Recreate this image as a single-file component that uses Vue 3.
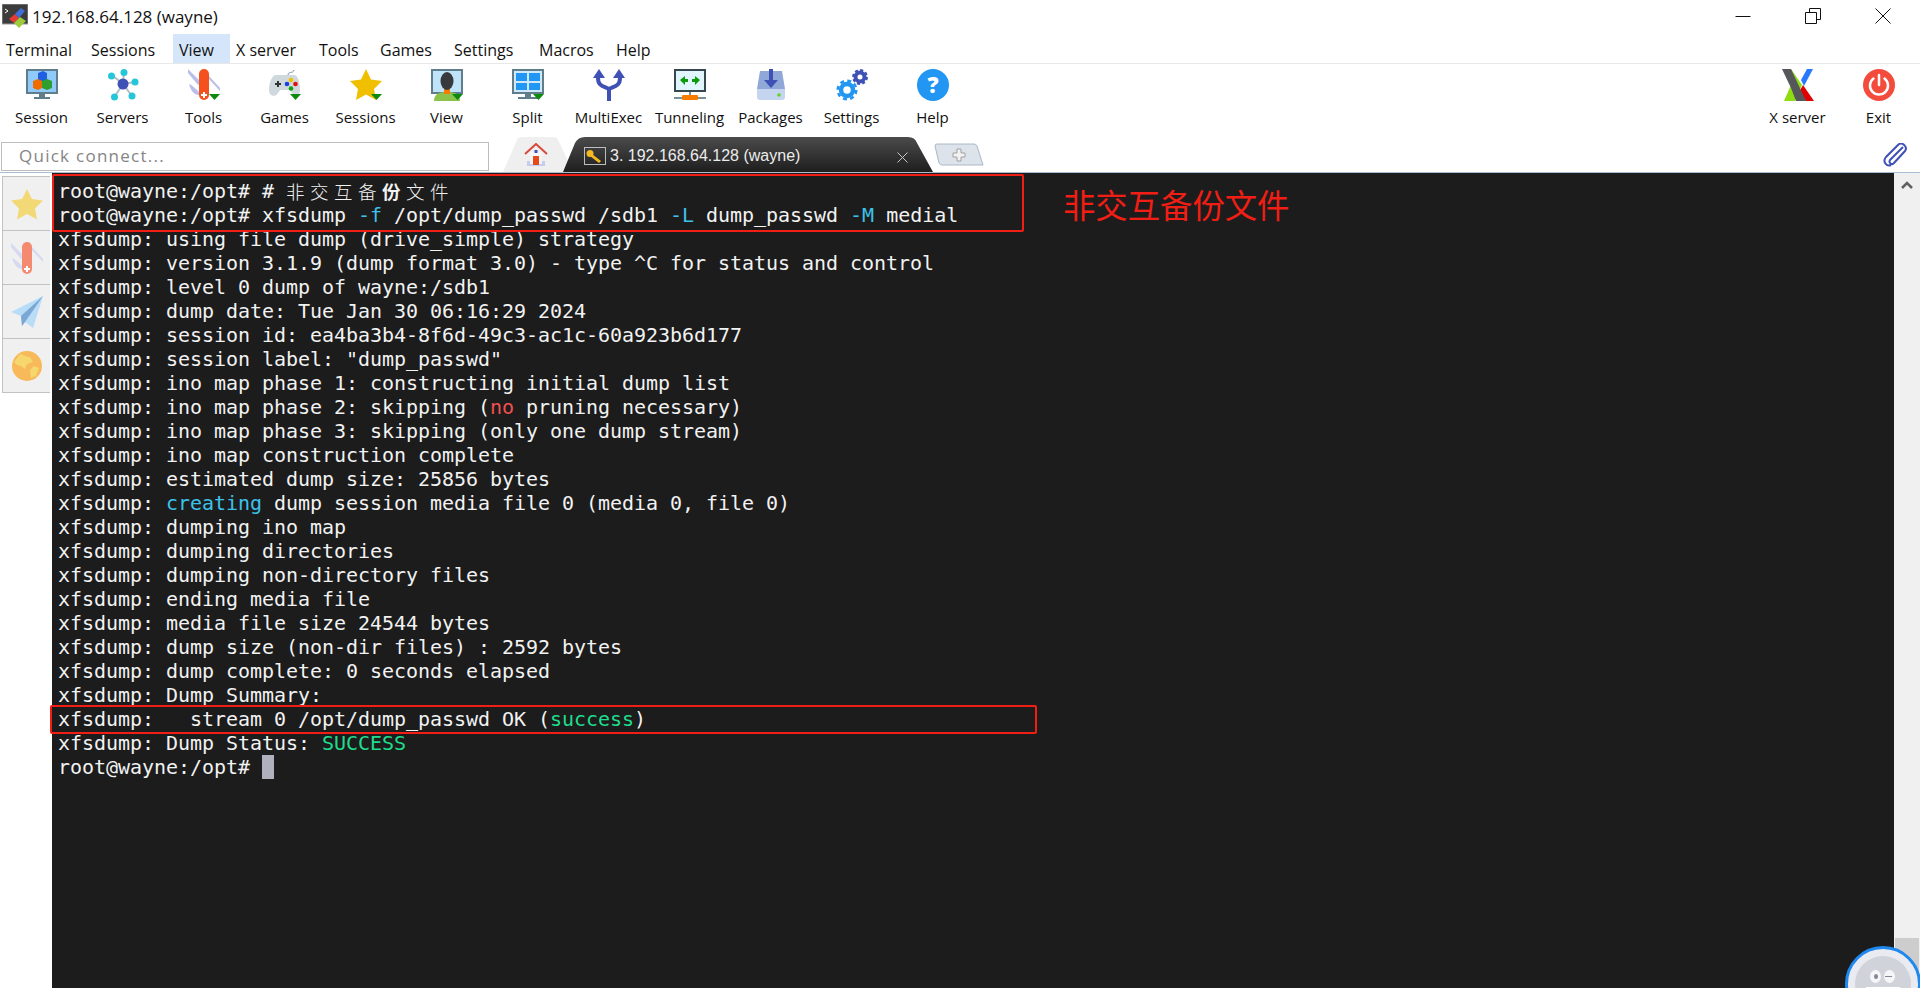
<script setup>
const menus = [
  { name: 'Terminal', width: 85 },
  { name: 'Sessions', width: 88 },
  { name: 'View', width: 57 },
  { name: 'X server', width: 83 },
  { name: 'Tools', width: 61 },
  { name: 'Games', width: 74 },
  { name: 'Settings', width: 85 },
  { name: 'Macros', width: 77 },
  { name: 'Help', width: 60 },
]
const tools = ['Session', 'Servers', 'Tools', 'Games', 'Sessions', 'View', 'Split', 'MultiExec', 'Tunneling', 'Packages', 'Settings', 'Help']
const cjk = ['非', '交', '互', '备', '份', '文', '件']
const lines = [
  [['root@wayne:/opt# xfsdump '], ['-f', 'c'], [' /opt/dump_passwd /sdb1 '], ['-L', 'c'], [' dump_passwd '], ['-M', 'c'], [' medial']],
  [['xfsdump: using file dump (drive_simple) strategy']],
  [['xfsdump: version 3.1.9 (dump format 3.0) - type ^C for status and control']],
  [['xfsdump: level 0 dump of wayne:/sdb1']],
  [['xfsdump: dump date: Tue Jan 30 06:16:29 2024']],
  [['xfsdump: session id: ea4ba3b4-8f6d-49c3-ac1c-60a923b6d177']],
  [['xfsdump: session label: "dump_passwd"']],
  [['xfsdump: ino map phase 1: constructing initial dump list']],
  [['xfsdump: ino map phase 2: skipping ('], ['no', 'r'], [' pruning necessary)']],
  [['xfsdump: ino map phase 3: skipping (only one dump stream)']],
  [['xfsdump: ino map construction complete']],
  [['xfsdump: estimated dump size: 25856 bytes']],
  [['xfsdump: '], ['creating', 'c'], [' dump session media file 0 (media 0, file 0)']],
  [['xfsdump: dumping ino map']],
  [['xfsdump: dumping directories']],
  [['xfsdump: dumping non-directory files']],
  [['xfsdump: ending media file']],
  [['xfsdump: media file size 24544 bytes']],
  [['xfsdump: dump size (non-dir files) : 2592 bytes']],
  [['xfsdump: dump complete: 0 seconds elapsed']],
  [['xfsdump: Dump Summary:']],
  [['xfsdump:   stream 0 /opt/dump_passwd OK ('], ['success', 'g'], [')']],
  [['xfsdump: Dump Status: '], ['SUCCESS', 'g']],
]
</script>

<template>
  <div class="app">
    <header class="title">
      <svg class="logo" viewBox="0 0 26 24" width="26" height="24">
        <rect x="0" y="0" width="26" height="20" fill="#3c3c3c" />
        <rect x="0" y="0" width="26" height="20" fill="none" stroke="#9a9a9a" />
        <path d="M3 5l3 2-3 2" fill="none" stroke="#fff" stroke-width="1" />
        <path d="M7 15l6-5 4 4-5 5z" fill="#e53935" />
        <path d="M13 10l6-6 4 3-6 7z" fill="#3f6fd8" />
        <path d="M12 19l6-6 6 4-7 7z" fill="#9ccc3c" />
      </svg>
      <span class="title-text">192.168.64.128 (wayne)</span>
      <div class="win">
        <svg viewBox="0 0 16 16" width="16" height="16"><path d="M0.5 8.500h15" stroke="#111" fill="none" /></svg>
        <svg viewBox="0 0 16 16" width="16" height="16"><path d="M0.5 4.500h11v11h-11zM4.500 4.500v-4h11v11h-4" stroke="#111" fill="none" /></svg>
        <svg viewBox="0 0 16 16" width="16" height="16"><path d="M0.5 0.500l15 15M15.500 0.500l-15 15" stroke="#111" fill="none" /></svg>
      </div>
    </header>

    <nav class="menu">
      <span v-for="m in menus" :key="m.name" class="menu-item" :class="{ active: m.name === 'View' }" :style="{ width: m.width + 'px' }">{{ m.name }}</span>
    </nav>

    <section class="toolbar">
      <div v-for="t in tools" :key="t" class="tool">
        <svg viewBox="0 0 32 32" width="32" height="32">
          <template v-if="t === 'Session'">
            <rect width="32" height="25" fill="#607d8b" />
            <rect x="2" y="2" width="28" height="21" fill="#90caf9" />
            <path d="M13 25h6v3h-6zM8 28h16v2H8z" fill="#607d8b" />
            <path d="M12 4l5-2 4 2v7l-4 2-5-2z" fill="#1f5fe0" />
            <path d="M7 12l5-2 4 2v7l-4 2-5-2z" fill="#ef6c00" />
            <path d="M16 12l5-2 5 2v7l-5 2-5-2z" fill="#2e9e2e" />
          </template>
          <template v-else-if="t === 'Servers'">
            <path d="M16 15L6 7M16 15L17 3M16 15L28 13M16 15L25 27M16 15L8 27" stroke="#b0bec5" stroke-width="2" />
            <circle cx="17" cy="3.500" r="3.500" fill="#26c6da" /><circle cx="4.500" cy="7" r="3.500" fill="#26c6da" />
            <circle cx="28" cy="13" r="3.500" fill="#26c6da" /><circle cx="25" cy="27" r="3.500" fill="#26c6da" />
            <circle cx="7.500" cy="28" r="3.500" fill="#26c6da" /><circle cx="16" cy="15" r="5.500" fill="#3f51b5" />
          </template>
          <template v-else-if="t === 'Tools'">
            <path d="M0 0l13 13-3 3L0 4zM32 22L19 8l2-1 11 12zM1 15c3 1 6 4 10 8v3C7 26 3 23 1 15z" fill="#b9bfe8" />
            <rect x="11" y="0" width="10" height="31" rx="5" fill="#f4511e" />
            <path d="M15 23h2v2h2v2h-2v2h-2v-2h-2v-2h2z" fill="#fff" />
            <path d="M21 25h11l-5.500 6z" fill="#0b8a0b" />
          </template>
          <template v-else-if="t === 'Games'">
            <path d="M19 6c0-4 5-1 6-5" fill="none" stroke="#78909c" />
            <path d="M7 6h18c4 0 6 8 6 15 0 6-5 8-8 3l-2-3H11l-2 3c-3 5-9 3-9-3C0 14 3 6 7 6z" fill="#cfd8dc" />
            <path d="M6 14h2v-2h2v2h2v2h-2v2H8v-2H6z" fill="#333" />
            <circle cx="22" cy="11" r="2.300" fill="#f0c000" /><circle cx="18" cy="15" r="2.300" fill="#1a3fe0" />
            <circle cx="26.500" cy="15" r="2.300" fill="#e01010" /><circle cx="22" cy="19.500" r="2.300" fill="#10a010" />
            <path d="M21 25h11l-5.500 6z" fill="#0b8a0b" />
          </template>
          <template v-else-if="t === 'Sessions'">
            <path d="M16 0l5 10.500 11 1.500-8 8 2 11-10-5.500L6 31l2-11-8-8 11-1.500z" fill="#f0c000" />
            <path d="M21 25h11l-5.500 6z" fill="#0b8a0b" />
          </template>
          <template v-else-if="t === 'View'">
            <rect width="32" height="25" fill="#607d8b" />
            <rect x="2" y="2" width="28" height="21" fill="#bfe3f8" />
            <path d="M3 32c0-7 5-9 13-9s13 2 13 9z" fill="#8bc34a" />
            <rect x="13" y="18" width="6" height="7" fill="#f57c00" />
            <ellipse cx="16" cy="12" rx="6.500" ry="9" fill="#37393d" />
            <path d="M21 25h11l-5.500 6z" fill="#0b8a0b" />
          </template>
          <template v-else-if="t === 'Split'">
            <rect width="32" height="25" fill="#607d8b" />
            <rect x="2" y="2" width="28" height="21" fill="#cfe8fa" />
            <path d="M4 4h11v8H4zM17 4h11v8H17zM4 14h11v7H4zM17 14h11v7H17z" fill="#2196f3" />
            <path d="M13 25h6v3h-6zM6 28h20v2H6z" fill="#607d8b" />
            <path d="M21 25h11l-5.500 6z" fill="#0b8a0b" />
          </template>
          <template v-else-if="t === 'MultiExec'">
            <path d="M5 9c0 8 5 8 11 11 6-3 11-3 11-11M16 19v13" fill="none" stroke="#3f51b5" stroke-width="4" />
            <path d="M0 9L6 0l6 9zM20 9l6-9 6 9z" fill="#3f51b5" />
          </template>
          <template v-else-if="t === 'Tunneling'">
            <rect width="32" height="23" fill="#37474f" />
            <rect x="2" y="2" width="28" height="19" fill="#e1f5fe" />
            <path d="M6 11l5-4v3h3v3h-3v3zM26 11l-5-4v3h-3v3h3v3z" fill="#0a9a0a" />
            <path d="M15 23h2v4h-2zM0 28h32v2H0z" fill="#78909c" />
            <rect x="8" y="26" width="16" height="5" rx="1" fill="#f57c00" />
          </template>
          <template v-else-if="t === 'Packages'">
            <path d="M5 2h22l3 18H2z" fill="#8fa8d8" />
            <path d="M2 20h28v8a3 3 0 0 1-3 3H5a3 3 0 0 1-3-3z" fill="#c5d5f0" />
            <circle cx="24" cy="26" r="1.800" fill="#66d02a" />
            <path d="M14 0h4v11h5l-7 8-7-8h5z" fill="#3f51b5" />
          </template>
          <template v-else-if="t === 'Settings'">
            <circle cx="11" cy="21" r="6" fill="none" stroke="#2196f3" stroke-width="4.500" />
            <circle cx="11" cy="21" r="9.300" fill="none" stroke="#2196f3" stroke-width="2.500" stroke-dasharray="4 3.300" />
            <circle cx="24" cy="8" r="4.500" fill="none" stroke="#3f51b5" stroke-width="4" />
            <circle cx="24" cy="8" r="6.800" fill="none" stroke="#3f51b5" stroke-width="2.300" stroke-dasharray="3 2.340" />
          </template>
          <template v-else-if="t === 'Help'">
            <circle cx="16" cy="16" r="16" fill="#2196f3" />
            <text x="16" y="23.500" text-anchor="middle" class="q">?</text>
          </template>
        </svg>
        <span class="tool-label">{{ t }}</span>
      </div>
      <div class="spacer"></div>
      <div class="tool">
        <svg viewBox="0 0 32 32" width="32" height="32">
          <path d="M1 0h8l11 16-7 16H2l7-16z" fill="#8fdc10" />
          <path d="M19 11L25 0h6L22 17z" fill="#2979ff" />
          <path d="M21 16l11 16h-8l-7-9z" fill="#e00000" />
          <path d="M0 0h9l15 32h-10L9 19z" fill="#55575a" />
        </svg>
        <span class="tool-label">X server</span>
      </div>
      <div class="tool">
        <svg viewBox="0 0 32 32" width="32" height="32">
          <circle cx="16" cy="16" r="16" fill="#f44c3c" />
          <path d="M10.500 9.500a9 9 0 1 0 11 0" fill="none" stroke="#fff" stroke-width="2.500" stroke-linecap="round" />
          <path d="M16 6v10" stroke="#fff" stroke-width="2.500" stroke-linecap="round" />
        </svg>
        <span class="tool-label">Exit</span>
      </div>
    </section>

    <section class="tabs">
      <div class="quick">Quick connect...</div>
      <div class="home-tab">
        <svg class="tab-bg" viewBox="0 0 68 35" width="68" height="35">
          <path d="M0 35L14 3Q15 0 19 0H50Q54 0 55 3L68 30V35z" fill="#efefef" />
        </svg>
        <svg class="home-icon" viewBox="0 0 24 24" width="24" height="24">
          <path d="M3 18h18v5H3z" fill="#c5cdf0" />
          <path d="M6 9h12v12H6z" fill="#f5f5f5" />
          <rect x="9" y="13" width="6" height="9" fill="#e64a19" />
          <rect x="10.500" y="7" width="3" height="3" fill="#3f51b5" />
          <path d="M1 11L12 1l11 10" fill="none" stroke="#d84a3a" stroke-width="2" />
        </svg>
      </div>
      <div class="dark-tab">
        <svg class="tab-bg" viewBox="0 0 370 35" width="370" height="35" preserveAspectRatio="none">
          <defs>
            <linearGradient id="dk" x1="0" y1="0" x2="0" y2="1">
              <stop offset="0" stop-color="#4b4b4b" /><stop offset="1" stop-color="#1e1e1e" />
            </linearGradient>
          </defs>
          <path d="M0 35L12 6Q15 0 22 0H345Q352 0 354 6L370 35z" fill="url(#dk)" />
        </svg>
        <span class="key-box">
          <svg viewBox="0 0 20 15" width="20" height="15">
            <circle cx="5" cy="4.500" r="3.500" fill="#f5b921" />
            <path d="M7 5l9 7-2 2-9-7z" fill="#f5b921" />
          </svg>
        </span>
        <span class="tab-text">3. 192.168.64.128 (wayne)</span>
        <svg class="tab-close" viewBox="0 0 11 11" width="11" height="11"><path d="M.5.5l10 10M10.500.5l-10 10" stroke="#c8c8c8" fill="none" /></svg>
      </div>
      <div class="new-tab">
        <svg class="tab-bg" viewBox="0 0 50 23" width="50" height="23"><path d="M1 3Q1 1 3 1H40Q42 1 43 3L49 22H8Q6 22 5 20z" fill="#dde3ea" stroke="#a9b8c8" /></svg>
        <svg class="plus" viewBox="0 0 14 14" width="14" height="14"><path d="M5 1h4v4h4v4H9v4H5V9H1V5h4z" fill="#f2f2f2" stroke="#a0a0a0" /></svg>
      </div>
      <div class="spacer"></div>
      <svg class="clip" viewBox="0 0 24 24" width="24" height="24">
        <path d="M20 5L7 18a2.500 2.500 0 0 0 4 3L22 9c3-4-3-10-7-6L3 15c-4 5 1 10 5 8" fill="none" stroke="#3f51b5" stroke-width="2" transform="translate(0 -1)" />
      </svg>
    </section>

    <main class="body">
      <aside class="side">
        <div class="side-cell">
          <svg viewBox="0 0 32 32" width="32" height="32"><path d="M16 1l5 10 11 1.500-8 8 2 11-10-5.500L6 31.500l2-11-8-8 11-1.500z" fill="#f3d976" /></svg>
        </div>
        <div class="side-cell">
          <svg viewBox="0 0 32 32" width="32" height="32">
            <path d="M0 1l13 13-3 3L0 5zM32 20L19 6l2-1 11 12zM1 16c3 1 6 4 10 8v3C7 27 3 23 1 16z" fill="#d5d9f2" />
            <rect x="11" y="0" width="10" height="32" rx="5" fill="#f48a70" />
            <path d="M15 24h2v2h2v2h-2v2h-2v-2h-2v-2h2z" fill="#fff" />
          </svg>
        </div>
        <div class="side-cell">
          <svg viewBox="0 0 32 32" width="32" height="32">
            <path d="M0 16L32 0 22 32l-8-6-3 4-1-10z" fill="#b9dcf7" />
            <path d="M32 0L10 20l1 10 3-4z" fill="#7ba7d4" />
          </svg>
        </div>
        <div class="side-cell">
          <svg viewBox="0 0 30 30" width="30" height="30">
            <circle cx="15" cy="15" r="15" fill="#f7b95a" />
            <path d="M8 3c5 1 6 3 10 3l3 5-6 2-2 5-4-3-4-1-3-3zM22 15l5 2-3 8-5 2-1-8z" fill="#f5d76e" />
          </svg>
        </div>
      </aside>

      <div class="term">
        <div class="line">root@wayne:/opt# # <span v-for="(c, i) in cjk" :key="c" class="cell" :class="{ heavy: i === 4 }">{{ c }}</span></div>
        <div v-for="(l, i) in lines" :key="i" class="line"><span v-for="(s, j) in l" :key="j" :class="s[1]">{{ s[0] }}</span></div>
        <div class="line">root@wayne:/opt# <span class="cursor"></span></div>

        <div class="mark mark-top"></div>
        <div class="mark mark-stream"></div>
        <div class="note">非交互备份文件</div>
      </div>

      <aside class="scroll">
        <svg class="arrow" viewBox="0 0 12 8" width="12" height="8"><path d="M1 7l5-5 5 5" fill="none" stroke="#606060" stroke-width="2.500" /></svg>
        <div class="spacer"></div>
        <div class="thumb"></div>
      </aside>

      <div class="avatar">
        <div class="face">
          <span class="eye left"></span><span class="eye right"></span>
          <span class="mouth"></span>
        </div>
      </div>
    </main>
  </div>
</template>

<style scoped>
.app {
  width: 1920px;
  height: 988px;
  display: flex;
  flex-direction: column;
  background: #fff;
  overflow: hidden;
  font-family: "Open Sans", "Noto Sans", sans-serif;
  color: #111;
}
.title {
  height: 32px;
  display: flex;
  align-items: center;
  padding-left: 2px;
  flex: none;
}
.logo { margin-right: 4px; }
.title-text { font-size: 17px; }
.win {
  margin-left: auto;
  display: flex;
  gap: 54px;
  padding-right: 29px;
}
.menu {
  height: 32px;
  flex: none;
  display: flex;
  border-bottom: 1px solid #e8e8e8;
  box-sizing: border-box;
}
.menu-item {
  padding: 3px 0 0 6px;
  box-sizing: border-box;
  font-size: 16px;
  line-height: 27px;
  margin-top: 2px;
  white-space: nowrap;
}
.menu-item.active {
  background: #d5e6fb;
}
.toolbar {
  height: 76px;
  flex: none;
  display: flex;
  padding: 5px 1px 0;
  box-sizing: border-box;
}
.tool {
  width: 81px;
  display: flex;
  flex-direction: column;
  align-items: center;
}
.tool-label {
  font-size: 15px;
  line-height: 20px;
  margin-top: 6px;
  white-space: nowrap;
}
.q {
  font: 800 22px "Open Sans", sans-serif;
  fill: #fff;
}
.spacer { flex: 1; }
.tabs {
  height: 33px;
  flex: none;
  display: flex;
  align-items: flex-end;
  border-bottom: 1px solid #a9bcd0;
  box-sizing: border-box;
  padding-left: 1px;
}
.quick {
  width: 488px;
  height: 29px;
  box-sizing: border-box;
  border: 1px solid #bdbdbd;
  margin-bottom: 1px;
  padding-left: 17px;
  font-size: 17px;
  line-height: 25px;
  color: #858585;
  letter-spacing: 1.260px;
}
.home-tab {
  position: relative;
  width: 68px;
  height: 32px;
  margin-left: 14px;
  display: flex;
  justify-content: center;
  align-items: center;
}
.tab-bg {
  position: absolute;
  left: 0;
  bottom: 0;
}
.home-icon { position: relative; top: -1px; left: -1px; }
.dark-tab {
  position: relative;
  width: 370px;
  height: 32px;
  margin-left: -8px;
  display: flex;
  align-items: center;
  padding-left: 21px;
  box-sizing: border-box;
  color: #ececec;
}
.key-box {
  position: relative;
  width: 22px;
  height: 18px;
  box-sizing: border-box;
  border: 1px solid #bdbdbd;
  display: flex;
  align-items: center;
  justify-content: center;
  margin-right: 4px;
}
.tab-text {
  position: relative;
  font-family: "Liberation Sans", sans-serif;
  font-size: 16px;
}
.tab-close {
  position: absolute;
  left: 334px;
  top: 12px;
}
.new-tab {
  position: relative;
  width: 50px;
  height: 23px;
  margin-left: 1px;
  margin-bottom: 6px;
  display: flex;
  align-items: center;
  justify-content: center;
}
.plus { position: relative; }
.clip { margin: 0 13px 5px 0; }
.body {
  position: relative;
  flex: 1;
  min-height: 0;
  display: flex;
  overflow: hidden;
}
.side {
  width: 52px;
  flex: none;
  box-sizing: border-box;
  padding: 3px 0 0 2px;
}
.side-cell {
  width: 48px;
  height: 54px;
  box-sizing: border-box;
  background: #f0f0f0;
  border: 1px solid #c2c2c2;
  border-bottom: 0;
  border-right: 0;
  display: flex;
  align-items: center;
  justify-content: center;
}
.side-cell:last-child { height: 55px; border-bottom: 1px solid #c2c2c2; }
.term {
  position: relative;
  flex: 1;
  background: #1c1c1c;
  color: #f2f2f2;
  box-sizing: border-box;
  padding: 6px 0 0 6px;
  font-family: "DejaVu Sans Mono", monospace;
  font-size: 20px;
  line-height: 24px;
  letter-spacing: -0.040px;
}
.line { height: 24px; white-space: pre; }
.c { color: #3cc2ea; }
.r { color: #f05050; }
.g { color: #1fdc8c; }
.cell {
  display: inline-block;
  width: 24px;
  font-family: "Noto Sans CJK SC", sans-serif;
  font-size: 18.500px;
  font-weight: 300;
  line-height: 24px;
  vertical-align: top;
}
.cell.heavy { font-weight: 700; }
.cursor {
  display: inline-block;
  width: 12px;
  height: 24px;
  background: #b0b0bf;
  vertical-align: top;
}
.mark {
  position: absolute;
  border: 2px solid #f01e14;
  border-radius: 2px;
  box-sizing: border-box;
}
.mark-top { left: 0; top: 1px; width: 972px; height: 58px; }
.mark-stream { left: -2px; top: 532px; width: 987px; height: 29px; }
.note {
  position: absolute;
  left: 1011px;
  top: 9px;
  font-family: "Noto Sans CJK SC", sans-serif;
  font-size: 32.400px;
  line-height: 44px;
  color: #f01e14;
  white-space: nowrap;
}
.scroll {
  width: 26px;
  flex: none;
  background: #f0f0f0;
  display: flex;
  flex-direction: column;
  align-items: center;
  padding-top: 8px;
  box-sizing: border-box;
}
.thumb {
  width: 24px;
  height: 50px;
  background: #cdcdcd;
}
.avatar {
  position: absolute;
  left: 1845px;
  top: 773px;
  width: 76px;
  height: 76px;
  border-radius: 50%;
  border: 3px solid #1e88f0;
  background: #e9ebf0;
  box-sizing: border-box;
  display: flex;
  align-items: center;
  justify-content: center;
}
.face {
  position: relative;
  width: 56px;
  height: 56px;
  border-radius: 50%;
  background: #d0d3da;
}
.eye {
  position: absolute;
  top: 14px;
  width: 11px;
  height: 13px;
  border-radius: 50%;
  background: #f5f6f8;
}
.eye.left { left: 15px; }
.eye.right { left: 29px; }
.eye.left::after {
  content: "";
  position: absolute;
  left: 4px;
  top: 4px;
  width: 4px;
  height: 5px;
  border-radius: 50%;
  background: #7f8794;
}
.eye.right::after {
  content: "";
  position: absolute;
  left: 1px;
  top: 6px;
  width: 7px;
  height: 1px;
  background: #7f8794;
}
.mouth {
  position: absolute;
  left: 10px;
  top: 31px;
  width: 36px;
  height: 14px;
  background: #fff;
  border-radius: 3px 3px 14px 14px;
}
</style>

<style>
html, body { margin: 0; overflow: hidden; background: #fff; }
</style>
